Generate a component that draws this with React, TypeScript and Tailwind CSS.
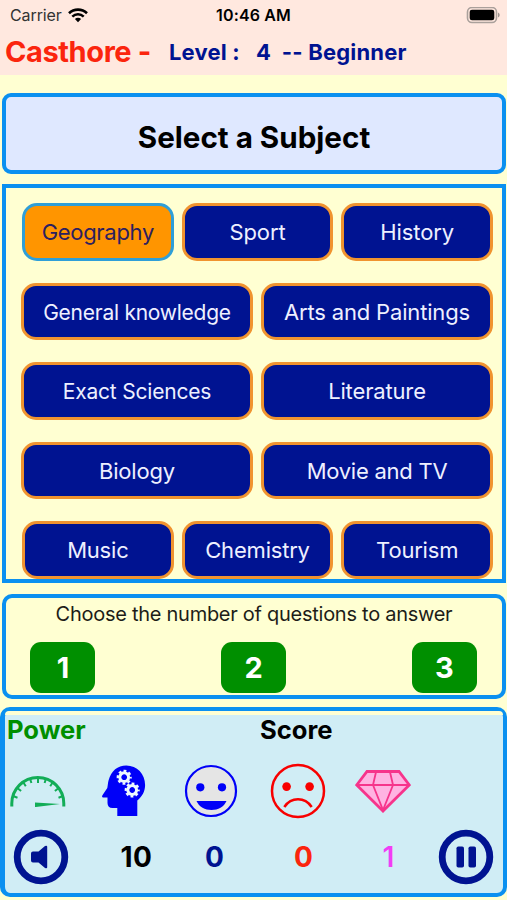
import React, { useState } from "react";
import clsx from "clsx";

type Subject = { name: string; text: string };

const subjectRows: Subject[][] = [
  [
    { name: "Geography", text: "text-[22px] tracking-[-0.3px]" },
    { name: "Sport", text: "text-[22px] tracking-[-0.1px]" },
    { name: "History", text: "text-[22px] tracking-[-0.1px]" },
  ],
  [
    { name: "General knowledge", text: "text-[21px] tracking-[-0.25px]" },
    { name: "Arts and Paintings", text: "text-[22px] tracking-[-0.17px]" },
  ],
  [
    { name: "Exact Sciences", text: "text-[21px] tracking-[-0.2px]" },
    { name: "Literature", text: "text-[22px] tracking-[-0.15px]" },
  ],
  [
    { name: "Biology", text: "text-[22px] tracking-[-0.2px]" },
    { name: "Movie and TV", text: "text-[22px] tracking-[-0.25px]" },
  ],
  [
    { name: "Music", text: "text-[22px] tracking-[-0.2px]" },
    { name: "Chemistry", text: "text-[22px] tracking-[-0.2px]" },
    { name: "Tourism", text: "text-[22px] tracking-[-0.2px]" },
  ],
];

function StatusBar() {
  return (
    <div className="grid h-[30px] grid-cols-3 items-center pl-[10px] pr-[7px] text-black">
      <div className="flex items-center gap-[7px]">
        <span className="text-[16px] leading-none tracking-[-0.1px] text-[#333]">Carrier</span>
        <svg className="-ml-[1px]" width="20" height="15" viewBox="0 0 20 15" fill="none" stroke="#000">
          <path d="M1 5.2a13 13 0 0 1 18 0" strokeWidth="2.6" />
          <path d="M4.3 8.6a8.2 8.2 0 0 1 11.4 0" strokeWidth="2.5" />
          <path d="M10 14.2 6.9 11.1a4.4 4.4 0 0 1 6.2 0z" fill="#000" stroke="none" />
        </svg>
      </div>
      <span className="-ml-[3px] text-center text-[16px] font-semibold leading-none tracking-[0.15px]">
        10:46 AM
      </span>
      <svg className="ml-auto" width="34" height="17" viewBox="0 0 34 17">
        <rect x="1.5" y="0.5" width="29" height="15" rx="4.5" fill="none" stroke="#aaa09b" strokeWidth="1.6" />
        <rect x="3.7" y="2.7" width="24.6" height="10.6" rx="2.3" />
        <path d="M32 5.5v5q1.7-.8 1.7-2.5T32 5.5z" fill="#9c938f" />
      </svg>
    </div>
  );
}

function Gauge() {
  return (
    <svg width="56" height="32" viewBox="0 0 56 32" fill="none" stroke="#12ad57">
      <path d="M1.8 31.5v-3a26 26 0 0 1 52 0v3" strokeWidth="3" />
      <path
        d="M3 21l4.5 1.7M7.3 13l3.8 3M13.2 7.3l2.6 3.9M20 3.5l1.4 4.5M28 2v6M36 3.5l-1.4 4.5M42.8 7.3l-2.6 3.9M48.7 13l-3.8 3M53 21l-4.5 1.7"
        strokeWidth="2"
      />
      <path d="M25 27.5 50 29.1l-25 3z" fill="#12ad57" stroke="none" />
    </svg>
  );
}

function Gear({ x, y }: { x: number; y: number }) {
  return (
    <g transform={`translate(${x} ${y})`} fill="none" stroke="#eefaff">
      <circle r="4.4" strokeWidth="3" />
      <circle r="6.4" strokeWidth="2.3" strokeDasharray="2.8 2.226" strokeDashoffset="1.4" />
    </g>
  );
}

function Brain() {
  return (
    <svg width="44" height="52" viewBox="0 0 44 52" fill="#0000f8">
      <path d="M15.3 51v-8H10.5c-3.2 0-5-2-5-5v-5.5H1.8c-1.9 0-2.1-1-1.2-2.4L5.3 23C5.9 20.5 5.8 18 6.600 15.3 9.3 6 15.5.6 24.3.6c10.7 0 18.8 8.4 18.8 19.4 0 6.5-3 11.5-7.8 15.5V51z" />
      <Gear x={22.2} y={12.2} />
      <Gear x={30.2} y={25} />
    </svg>
  );
}

function Smile() {
  return (
    <svg width="54" height="54" viewBox="0 0 54 54" fill="#0000f8">
      <circle cx="27" cy="27" r="25" fill="#e5e5e5" stroke="#0000f8" strokeWidth="2.2" />
      <circle cx="16.3" cy="23.3" r="4.1" />
      <circle cx="38" cy="23.3" r="4.1" />
      <path d="M12.5 37h30c-2.5 6-8.5 9-15 9s-12.5-3-15-9z" />
    </svg>
  );
}

function Sad() {
  return (
    <svg width="56" height="56" viewBox="0 0 56 56" fill="#f80000">
      <circle cx="28" cy="28" r="26" fill="none" stroke="#f80000" strokeWidth="2.5" />
      <circle cx="16.6" cy="23.6" r="4.3" />
      <circle cx="39.6" cy="23.6" r="4.3" />
      <path d="M14.3 44c7-10.2 20.4-10.2 27.4 0" fill="none" stroke="#f80000" strokeWidth="2.5" />
    </svg>
  );
}

function Diamond() {
  return (
    <svg width="56" height="44" viewBox="0 0 56 44" fill="#ffb3e2" stroke="#f6348b" strokeWidth="2.8">
      <path d="M12 2.5h32L54.3 16 28 42 1.7 16z" />
      <path d="M2 16h52M21 3 18 16l10 25 10-25-3-13" fill="none" strokeWidth="1.8" />
    </svg>
  );
}

function SpeakerButton() {
  return (
    <svg width="56" height="56" viewBox="0 0 56 56" fill="#001391">
      <circle cx="28" cy="28" r="23.8" fill="none" stroke="#001391" strokeWidth="6.8" />
      <path d="M20 22.5h5.5L32 17q2.2-1 2.2.7v20.6q0 1.7-2.2.7L25.5 33.5H20q-2 0-2-2v-7q0-2 2-2z" />
    </svg>
  );
}

function PauseButton() {
  return (
    <svg width="56" height="56" viewBox="0 0 56 56" fill="#001391">
      <circle cx="28" cy="28" r="23.8" fill="none" stroke="#001391" strokeWidth="6.8" />
      <rect x="18.5" y="17.5" width="7.5" height="21" rx="1.8" />
      <rect x="30.5" y="17.5" width="7.5" height="21" rx="1.8" />
    </svg>
  );
}

export default function App() {
  const [selected, setSelected] = useState("Geography");

  return (
    <div className="flex h-[900px] w-[507px] flex-col overflow-hidden bg-[#ffffd2] font-['Inter',sans-serif] text-black">
      <header className="h-[75px] shrink-0 bg-[#ffe8df]">
        <StatusBar />
        <div className="flex h-[44px] items-center whitespace-pre pl-[5px] font-bold [font-feature-settings:'calt'_0]">
          <h1 className="w-[164px] text-[29px] tracking-[-0.4px] text-[#fb250d]">Casthore -</h1>
          <p className="text-[22px] tracking-[0.18px] text-[#001391]">{"Level :   4  -- Beginner"}</p>
        </div>
      </header>

      <div className="ml-[2px] mt-[18px] flex h-[81px] w-[504px] shrink-0 items-center justify-center rounded-[9px] border-4 border-[#0b90f0] bg-[#dfe8ff] pt-[8px]">
        <h2 className="text-[29.6px] font-bold leading-none">Select a Subject</h2>
      </div>

      <div className="ml-[2px] mt-[10px] flex h-[399px] w-[504px] shrink-0 flex-col gap-[22px] border-4 border-[#0b90f0] pl-[15px] pr-[9px] pt-[15px]">
        {subjectRows.map((row, i) => (
          <div
            key={i}
            className={clsx("flex h-[57.5px] shrink-0 gap-[8px]", row.length === 3 && "pl-[1px]")}
          >
            {row.map(({ name, text }) => (
              <button
                key={name}
                onClick={() => setSelected(name)}
                className={clsx(
                  "flex-1 basis-0 whitespace-nowrap rounded-[15px] border-[3px] pt-[2px]",
                  text,
                  selected === name
                    ? "border-[#2f9fd8] bg-[#ff9500] text-[#2c2060]"
                    : "border-[#f0932f] bg-[#001391] text-[#eef0ff]",
                )}
              >
                {name}
              </button>
            ))}
          </div>
        ))}
      </div>

      <div className="ml-[2px] mt-[11px] h-[105px] w-[504px] shrink-0 rounded-[10px] border-4 border-[#0b90f0]">
        <p className="flex h-[31px] items-center justify-center whitespace-nowrap text-[20px] tracking-[-0.27px] text-[#1d1d18]">
          Choose the number of questions to answer
        </p>
        <div className="mt-[13px] flex justify-between pl-[24.4px] pr-[25px]">
          {[1, 2, 3].map((n) => (
            <button
              key={n}
              className="h-[51px] w-[65px] rounded-[11px] bg-[#008f00] text-[29px] font-bold text-white"
            >
              {n}
            </button>
          ))}
        </div>
      </div>

      <div className="mt-[8px] flex h-[190px] shrink-0 flex-col rounded-[10px] border-4 border-l-[5px] border-[#0b90f0] bg-[#d0edf5]">
        <div className="h-[4px] shrink-0 rounded-t-[5px] bg-[#ffffd2]" />
        <div className="flex h-[31px] items-center text-[25.6px] font-bold">
          <span className="w-[255px] pl-[2px] text-[#008f00]">Power</span>
          <span>Score</span>
        </div>
        <div className="flex h-[90px] items-center pl-[5px]">
          <Gauge />
          <div className="ml-[36px]"><Brain /></div>
          <div className="ml-[37.5px]"><Smile /></div>
          <div className="ml-[32.5px]"><Sad /></div>
          <div className="ml-[28.5px]"><Diamond /></div>
        </div>
        <div className="flex h-[42px] items-center pl-[8.4px] pr-[9px] text-[28px] font-bold">
          <SpeakerButton />
          <span className="ml-[39px] w-[56px] text-center tracking-[0.5px]">10</span>
          <span className="ml-[34px] w-[32px] text-center text-[#001391]">0</span>
          <span className="ml-[57px] w-[32px] text-center text-[#fb250d]">0</span>
          <span className="ml-[53px] w-[32px] text-center font-semibold text-[#f13df5]">1</span>
          <div className="ml-auto"><PauseButton /></div>
        </div>
      </div>
    </div>
  );
}
